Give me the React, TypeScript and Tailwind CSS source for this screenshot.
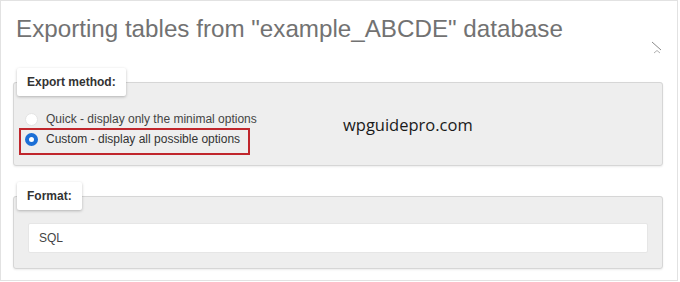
import React from 'react';

const sans = { fontFamily: '"Liberation Sans", Arial, sans-serif' };

function Radio({ checked }: { checked?: boolean }) {
  return checked ? (
    <span className="w-[13px] h-[13px] rounded-full border-[4px] border-[#1c6fd6] bg-white shrink-0" />
  ) : (
    <span className="w-[13px] h-[13px] rounded-full border border-[#e4e4e4] bg-white shrink-0" />
  );
}

export default function App() {
  return (
    <div className="w-[680px] h-[282px] bg-white relative overflow-hidden" style={sans}>
      <div className="w-[678px] h-[281px] border border-[#e2e2e2]">
        {/* page title */}
        <div className="mt-[14px] h-[28px] pl-[15px] flex items-start justify-between pr-[12px]">
          <h2 className="text-[24.2px] leading-[28px] text-[#727272] font-normal">
            Exporting tables from "example_ABCDE" database
          </h2>
          <svg width="12" height="14" viewBox="0 0 12 14" className="mt-[26px] mr-[2px] shrink-0">
            <path d="M1 1 L10 9" stroke="#8a8a8a" strokeWidth="1" fill="none" />
            <path d="M3 12 L6 9.5 L9 12" stroke="#b0b0b0" strokeWidth="1" fill="none" />
          </svg>
        </div>

        {/* export method */}
        <fieldset className="mt-[25px] ml-[12px] w-[650px] bg-[#eeeeee] border border-[#d6d6d6] rounded-[3px] shadow-[0_1px_2px_rgba(0,0,0,0.08)]">
          <legend className="ml-[3px] px-[10px] py-[6px] bg-white rounded-[2px] shadow-[0_1px_3px_rgba(0,0,0,0.25)] text-[12px] leading-[16px] font-bold text-[#333]">
            Export method:
          </legend>
          <div className="pt-[14px] pb-[10px]">
            <div className="flex items-center gap-[8px] h-[18px] pl-[11px] text-[12px] text-[#444]">
              <Radio />
              <span>Quick - display only the minimal options</span>
            </div>
            <div className="ml-[5px] w-[231px] border-2 border-[#c0262c] pt-0 pb-[5px]">
              <div className="flex items-center gap-[8px] h-[18px] pl-[4px] text-[12px] text-[#333]">
                <Radio checked />
                <span>Custom - display all possible options</span>
              </div>
            </div>
          </div>
        </fieldset>

        {/* format */}
        <fieldset className="mt-[16px] ml-[12px] w-[650px] bg-[#eeeeee] border border-[#d6d6d6] rounded-[3px] shadow-[0_1px_2px_rgba(0,0,0,0.08)]">
          <legend className="ml-[3px] px-[10px] py-[6px] bg-white rounded-[2px] shadow-[0_1px_3px_rgba(0,0,0,0.25)] text-[12px] leading-[16px] font-bold text-[#333]">
            Format:
          </legend>
          <div className="pt-[13px] pb-[15px] pl-[14px]">
            <div className="w-[620px] h-[30px] bg-white border border-[#e6e6e6] rounded-[2px] flex items-center pl-[10px] text-[12px] text-[#444]">
              SQL
            </div>
          </div>
        </fieldset>
      </div>

      {/* watermark */}
      <div
        className="absolute left-[343px] top-[113px] text-[16.5px] leading-[24px] text-[#1a1a1a]"
        style={{ fontFamily: '"Open Sans", sans-serif' }}
      >
        wpguidepro.com
      </div>
    </div>
  );
}
